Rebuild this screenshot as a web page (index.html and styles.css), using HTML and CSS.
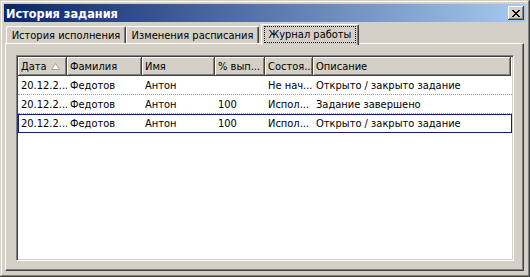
FILE: index.html
```html
<!DOCTYPE html>
<html lang="ru">
<head>
    <meta charset="UTF-8">
    <title>История задания</title>
    <link rel="stylesheet" href="styles.css">
</head>
<body>

    <div class="window">
        <!-- заголовок окна -->
        <div class="titlebar">
            <span class="title">История задания</span>
            <div class="close-btn">
                <svg width="8" height="7" viewBox="0 0 8 7">
                    <path d="M0 0h2v1h1v1h2v-1h1v-1h2v1h-1v1h-1v1h-1v1h1v1h1v1h1v1h-2v-1h-1v-1h-2v1h-1v1h-2v-1h1v-1h1v-1h1v-1h-1v-1h-1v-1h-1z" fill="#000"/>
                </svg>
            </div>
        </div>

        <!-- вкладки -->
        <div class="tabs">
            <div class="tab tab-1">История исполнения</div>
            <div class="tab tab-2">Изменения расписания</div>
            <div class="tab tab-3 active"><span class="focus">Журнал работы</span></div>
        </div>

        <div class="page">
            <div class="list">
                <div class="row head">
                    <div class="cell">Дата <svg class="sort" width="9" height="7" viewBox="0 0 9 7"><path d="M4.5 0.5 L8.5 6.5 L0.5 6.5 Z" fill="#fff" stroke="#a0a0a0" stroke-width="1"/></svg></div>
                    <div class="cell">Фамилия</div>
                    <div class="cell">Имя</div>
                    <div class="cell">% вып...</div>
                    <div class="cell">Состоя...</div>
                    <div class="cell">Описание</div>
                </div>
                <div class="row item dotted">
                    <div class="cell">20.12.2...</div>
                    <div class="cell">Федотов</div>
                    <div class="cell">Антон</div>
                    <div class="cell"></div>
                    <div class="cell">Не нач...</div>
                    <div class="cell">Открыто / закрыто задание</div>
                </div>
                <div class="row item dotted">
                    <div class="cell">20.12.2...</div>
                    <div class="cell">Федотов</div>
                    <div class="cell">Антон</div>
                    <div class="cell">100</div>
                    <div class="cell">Испол...</div>
                    <div class="cell">Задание завершено</div>
                </div>
                <div class="row item focused">
                    <div class="cell">20.12.2...</div>
                    <div class="cell">Федотов</div>
                    <div class="cell">Антон</div>
                    <div class="cell">100</div>
                    <div class="cell">Испол...</div>
                    <div class="cell">Открыто / закрыто задание</div>
                </div>
            </div>
        </div>
    </div>

</body>
</html>
```

FILE: styles.css
```css
body {
    margin: 0;
    padding: 0;
    background-color: #d4d0c8;
    font-family: "DejaVu Sans Condensed", "Liberation Sans", sans-serif;
    font-size: 11px;
    color: #000;
}

.window {
    width: 530px;
    height: 277px;
    box-sizing: border-box;
    padding: 4px;
    background-color: #d4d0c8;
    display: flex;
    flex-direction: column;
    box-shadow: inset -1px -1px #404040, inset 1px 1px #d4d0c8,
                inset -2px -2px #808080, inset 2px 2px #fff;
}

.titlebar {
    height: 18px;
    display: flex;
    align-items: center;
    justify-content: space-between;
    padding: 0 2px;
    background: linear-gradient(to right, #0a246a, #a6caf0);
}

.title {
    color: #fff;
    font-weight: bold;
    font-size: 12.6px;
}

.close-btn {
    width: 16px;
    height: 14px;
    box-sizing: border-box;
    background-color: #d4d0c8;
    display: flex;
    align-items: center;
    justify-content: center;
    box-shadow: inset -1px -1px #404040, inset 1px 1px #fff,
                inset -2px -2px #808080;
}

.tabs {
    height: 21px;
    display: flex;
    align-items: flex-end;
    padding-left: 2px;
}

.tab {
    height: 17px;
    box-sizing: border-box;
    display: flex;
    align-items: center;
    justify-content: center;
    border-top: 1px solid #fff;
    border-left: 1px solid #fff;
    border-right: 1px solid #404040;
    border-radius: 2px 2px 0 0;
    box-shadow: inset -1px 0 #808080;
    white-space: nowrap;
}

.tab-1 {
    width: 120px;
}

.tab-2 {
    width: 133px;
}

.tab.active {
    position: relative;
    z-index: 1;
    width: 98px;
    height: 21px;
    margin-left: 2px;
    margin-bottom: -2px;
    padding-bottom: 2px;
    background-color: #d4d0c8;
}

.focus {
    display: flex;
    align-items: center;
    justify-content: center;
    width: 92px;
    height: 17px;
    box-sizing: border-box;
    border: 1px dotted #000;
}

.page {
    flex: 1;
    margin: 0 2px 2px 1px;
    padding: 11px 9px 9px 10px;
    display: flex;
    border-top: 1px solid #fff;
    border-left: 1px solid #fff;
    border-right: 1px solid #404040;
    border-bottom: 1px solid #404040;
    box-shadow: inset -1px -1px #808080;
}

.list {
    flex: 1;
    background-color: #fff;
    border-top: 1px solid #808080;
    border-left: 1px solid #808080;
    border-right: 1px solid #fff;
    border-bottom: 1px solid #fff;
    box-shadow: inset 1px 1px #404040, inset -1px -1px #d4d0c8;
    padding: 1px;
}

.row {
    display: grid;
    grid-template-columns: 49px 75px 73px 50px 48px 198px;
    height: 19px;
    box-sizing: border-box;
}

.cell {
    display: flex;
    align-items: center;
    padding-left: 3px;
    white-space: nowrap;
    overflow: hidden;
}

.head .cell {
    background-color: #d4d0c8;
    box-sizing: border-box;
    border-right: 1px solid #404040;
    border-bottom: 1px solid #404040;
    box-shadow: inset 1px 1px #fff, inset -1px -1px #808080;
}

.sort {
    margin-left: 4px;
}

.item.dotted {
    border-bottom: 1px dotted #a0a0a0;
}

.item.focused {
    box-shadow: inset 0 0 0 1px #0a246a;
}
```
